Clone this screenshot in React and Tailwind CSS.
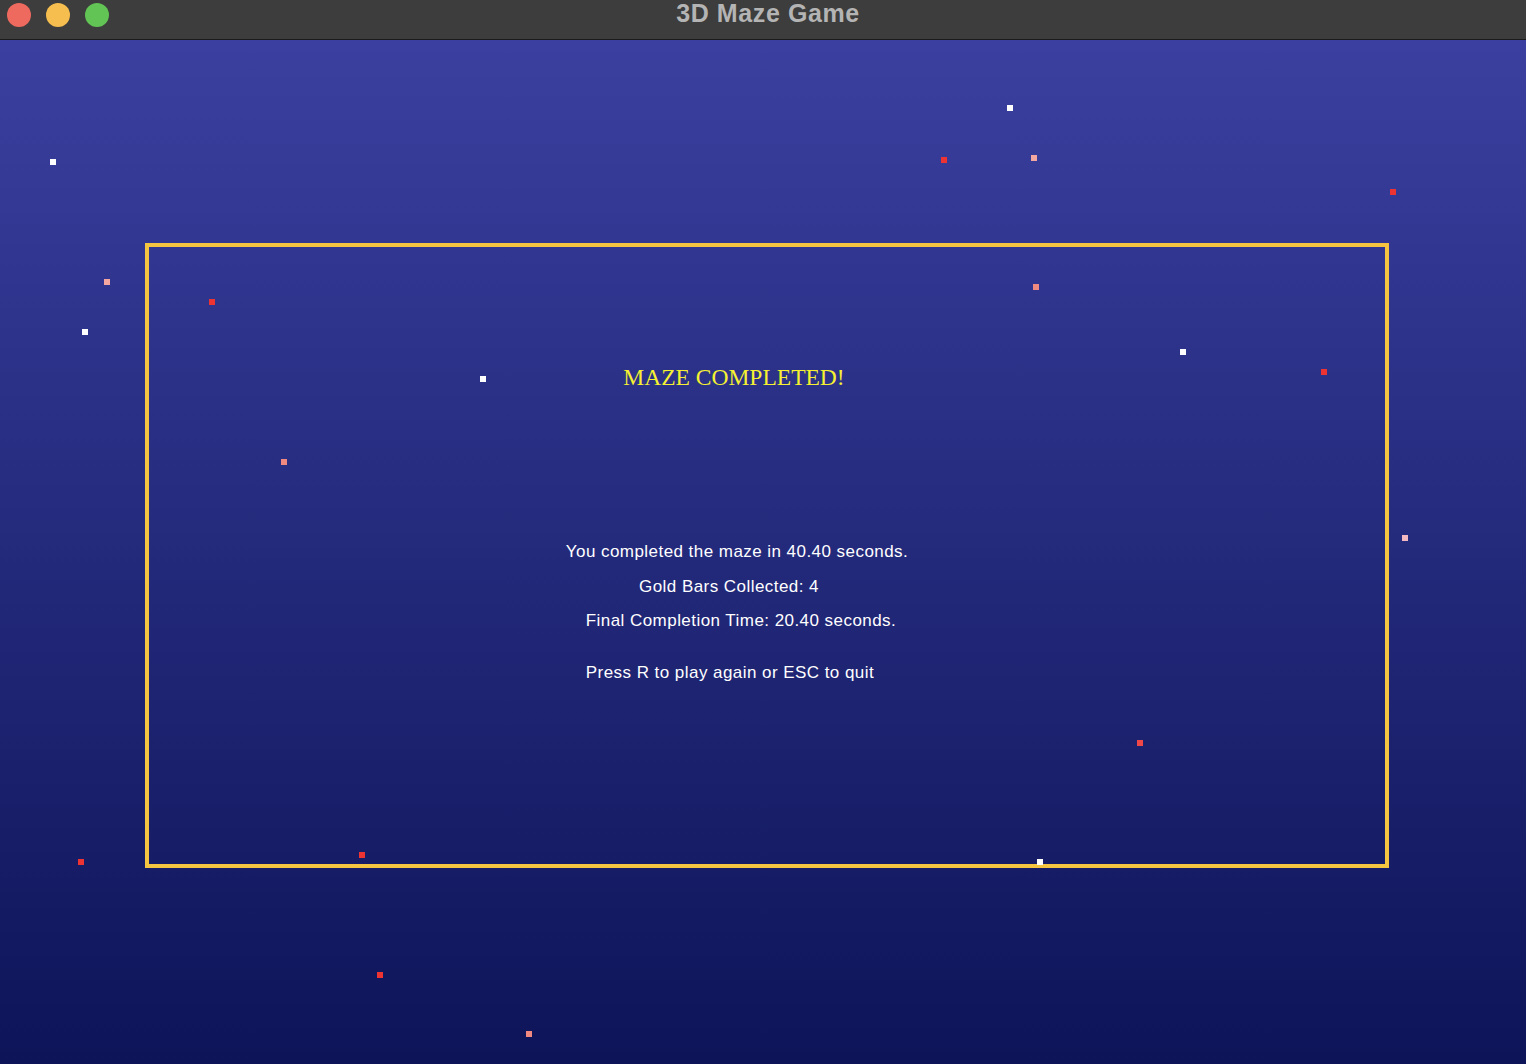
const stars = [
  { x: 53, y: 161, c: "bg-white" },
  { x: 1010, y: 107, c: "bg-white" },
  { x: 85, y: 331, c: "bg-white" },
  { x: 483, y: 378, c: "bg-white" },
  { x: 1183, y: 351, c: "bg-white" },
  { x: 1040, y: 861, c: "bg-white" },
  { x: 107, y: 281, c: "bg-[#f4a7a0]" },
  { x: 1034, y: 157, c: "bg-[#f4a7a0]" },
  { x: 1036, y: 286, c: "bg-[#f08a80]" },
  { x: 284, y: 461, c: "bg-[#f08a80]" },
  { x: 1405, y: 537, c: "bg-[#f4b8c0]" },
  { x: 529, y: 1033, c: "bg-[#f08a80]" },
  { x: 944, y: 159, c: "bg-[#ee3333]" },
  { x: 1393, y: 191, c: "bg-[#ee3333]" },
  { x: 212, y: 301, c: "bg-[#ee3333]" },
  { x: 1324, y: 371, c: "bg-[#ee3333]" },
  { x: 1140, y: 742, c: "bg-[#f04848]" },
  { x: 81, y: 861, c: "bg-[#ee3333]" },
  { x: 362, y: 854, c: "bg-[#ee3333]" },
  { x: 380, y: 974, c: "bg-[#ee3333]" },
];

function TitleBar() {
  return (
    <div className="relative h-[40px] bg-[#3c3d3c] border-b border-[#1b1b1b] flex items-center justify-center">
      <div className="absolute left-[7px] top-[3px] flex gap-[15px]">
        <span className="w-[24px] h-[24px] rounded-full bg-[#ee6a5f]" />
        <span className="w-[24px] h-[24px] rounded-full bg-[#f5be4f]" />
        <span className="w-[24px] h-[24px] rounded-full bg-[#61c454]" />
      </div>
      <div className="ml-[10px] -mt-[12px] text-[25px] tracking-[0.6px] font-bold text-[#b4b4b4] font-['Liberation_Sans',Arial,sans-serif]">
        3D Maze Game
      </div>
    </div>
  );
}

export default function App() {
  return (
    <div className="w-[1526px] h-[1064px] overflow-hidden flex flex-col">
      <TitleBar />
      <div className="relative flex-1 bg-gradient-to-b from-[#3b40a0] to-[#0e1458] pt-[203px] pl-[145px]">
        <div className="w-[1244px] h-[625px] border-4 border-[#f5c542] flex flex-col items-center pr-[60px]">
          <h1 className="mt-[116px] -ml-[6px] text-[23.5px] leading-[28px] text-[#f5f032] font-['Liberation_Serif','Times_New_Roman',serif]">
            MAZE COMPLETED!
          </h1>
          <div className="mt-[151px] flex flex-col items-center text-white text-[17px] tracking-[0.45px] font-['Liberation_Sans',Arial,sans-serif] leading-[20px]">
            <p>You completed the maze in 40.40 seconds.</p>
            <p className="mt-[15px] -ml-[16px]">Gold Bars Collected: 4</p>
            <p className="mt-[14px] ml-[8px]">Final Completion Time: 20.40 seconds.</p>
            <p className="mt-[32px] -ml-[14px]">Press R to play again or ESC to quit</p>
          </div>
        </div>
        {stars.map((s, i) => (
          <span
            key={i}
            className={`absolute w-[6px] h-[6px] ${s.c}`}
            style={{ left: s.x - 3, top: s.y - 42 }}
          />
        ))}
      </div>
    </div>
  );
}
